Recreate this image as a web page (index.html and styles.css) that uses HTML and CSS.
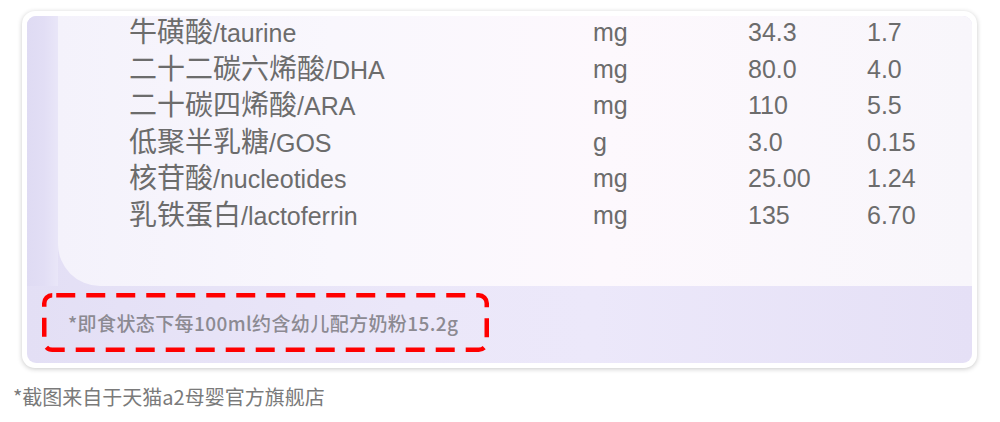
FILE: index.html
```html
<!DOCTYPE html>
<html lang="zh-CN">
<head>
  <meta charset="UTF-8" />
  <meta name="viewport" content="width=device-width, initial-scale=1.0" />
  <title>营养成分表截图</title>
  <link rel="stylesheet" href="styles.css">
</head>
<body>
  <div class="shot">
    <div class="picture">
      <div class="upper">
        <div class="strip"></div>
        <div class="panel">
          <div class="table">
            <div class="name"><span class="zh">牛磺酸</span>/taurine</div>
            <div>mg</div><div>34.3</div><div>1.7</div>

            <div class="name"><span class="zh">二十二碳六烯酸</span>/DHA</div>
            <div>mg</div><div>80.0</div><div>4.0</div>

            <div class="name"><span class="zh">二十碳四烯酸</span>/ARA</div>
            <div>mg</div><div>110</div><div>5.5</div>

            <div class="name"><span class="zh">低聚半乳糖</span>/GOS</div>
            <div>g</div><div>3.0</div><div>0.15</div>

            <div class="name"><span class="zh">核苷酸</span>/nucleotides</div>
            <div>mg</div><div>25.00</div><div>1.24</div>

            <div class="name"><span class="zh">乳铁蛋白</span>/lactoferrin</div>
            <div>mg</div><div>135</div><div>6.70</div>
          </div>
        </div>
      </div>
      <div class="band">
        <div class="note">
          <svg class="dash" width="447" height="59" viewBox="0 0 447 59">
            <rect x="2.25" y="2.25" width="442.5" height="54.5" rx="8" ry="8" fill="none" stroke="#ff0000" stroke-width="4.5" stroke-dasharray="19 11" stroke-dashoffset="-4"/>
          </svg>
          <p>*即食状态下每100ml约含幼儿配方奶粉15.2g</p>
        </div>
      </div>
    </div>
  </div>
  <p class="caption">*截图来自于天猫a2母婴官方旗舰店</p>
</body>
</html>
```

FILE: styles.css
```css
body {
  margin: 0;
  background: #fff;
  font-family: "Noto Sans CJK SC", "Noto Sans", sans-serif;
}
.shot {
  width: 945px;
  height: 347px;
  margin: 11px 0 0 22px;
  padding: 5px;
  background: #fff;
  border-radius: 13px;
  box-shadow: 0 1px 5px rgba(0,0,0,0.22);
}
.picture {
  height: 100%;
  border-radius: 9px;
  overflow: hidden;
  display: flex;
  flex-direction: column;
  background: linear-gradient(90deg, #e3dff5, #ebe7f9 40%, #ece8fa 60%, #e5e0f6);
}
.upper {
  height: 270px;
  display: flex;
}
.strip {
  width: 31px;
  background: linear-gradient(90deg, #dfdbf3, #e2def5 55%, #e9e6f8);
}
.panel {
  flex: 1;
  border-bottom-left-radius: 42px;
  background: linear-gradient(90deg, #f4f2fb, #f9f7fd 30%, #fdf8fd 60%, #f8f6fb);
  overflow: hidden;
}
.table {
  display: grid;
  grid-template-columns: 464px 155px 119px auto;
  grid-auto-rows: 36.6px;
  padding: 0 0 0 71px;
  font-family: "Liberation Sans", "Noto Sans CJK SC", sans-serif;
  font-size: 25px;
  line-height: 32px;
  color: #6c6c6c;
}
.zh {
  font-family: "Noto Sans CJK SC", sans-serif;
  font-size: 28px;
  line-height: 1;
}
.band {
  flex: 1;
  padding: 7px 0 0 15px;
}
.note {
  position: relative;
  width: 447px;
  height: 59px;
  display: flex;
  align-items: center;
}
.dash {
  position: absolute;
  left: 0;
  top: 0;
}
.note p {
  margin: 0 0 0 26px;
  font-size: 19px;
  font-weight: 500;
  color: #8c8a92;
  letter-spacing: 0.4px;
}
.caption {
  margin: 15px 0 0 13px;
  font-size: 20px;
  line-height: 28px;
  color: #7a7a7a;
}
```
